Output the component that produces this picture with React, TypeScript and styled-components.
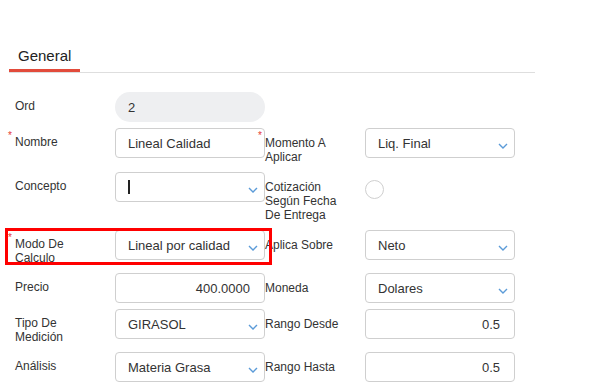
import styled, { createGlobalStyle } from 'styled-components';

const GlobalStyle = createGlobalStyle`
  body {
    margin: 0;
    background: #fff;
    font-family: "Liberation Sans", Arial, sans-serif;
    color: #333;
  }
`;

const Page = styled.div`
  width: 591px;
  height: 391px;
  overflow: hidden;
`;
const TabBar = styled.div`
  margin: 47px 0 0 9px;
  width: 526px;
  border-bottom: 1px solid #dedede;
  display: flex;
`;
const Tab = styled.div`
  padding: 0 9px 4px;
  font-size: 15px;
  line-height: 18px;
  color: #222;
  border-bottom: 3px solid #e24b3b;
`;
const Form = styled.div`
  margin-top: 19px;
  display: flex;
  flex-direction: column;
  gap: 6px;
`;
const Row = styled.div`
  position: relative;
  display: flex;
  align-items: flex-start;
  padding-left: 15px;
`;
const Label = styled.div<{ $side?: 'right' }>`
  position: relative;
  box-sizing: border-box;
  width: 100px;
  flex-shrink: 0;
  padding: ${(p) => (p.$side === 'right' ? '8px' : '7px')} 20px 2px 0;
  font-size: 12px;
  line-height: 14px;
  color: #333;
`;
const Required = styled.span`
  position: absolute;
  left: -7px;
  top: 3px;
  font-size: 10px;
  line-height: 10px;
  color: #e53935;
`;
const Box = styled.div<{ $align?: 'right' }>`
  position: relative;
  box-sizing: border-box;
  width: 150px;
  height: 30px;
  flex-shrink: 0;
  border: 1px solid #cfcfcf;
  border-radius: 4px;
  background: #fff;
  display: flex;
  align-items: center;
  justify-content: ${(p) => (p.$align === 'right' ? 'flex-end' : 'flex-start')};
  padding: 0 14px 0 12px;
  font-size: 13px;
  color: #333;
`;
const Pill = styled(Box)`
  border: none;
  border-radius: 15px;
  background: #eeeff1;
  padding-left: 13px;
`;
const Caret = styled.span`
  width: 1.5px;
  height: 14px;
  background: #222;
`;
const Chevron = styled.svg`
  position: absolute;
  right: 6px;
  top: 14px;
`;
const Radio = styled.div`
  margin-top: 8px;
  width: 19px;
  height: 19px;
  box-sizing: border-box;
  border: 1px solid #cfcfcf;
  border-radius: 50%;
`;
const Highlight = styled.div`
  position: absolute;
  left: 5px;
  top: -2px;
  width: 267px;
  height: 37px;
  box-sizing: border-box;
  border: 3px solid #ff0000;
  pointer-events: none;
`;

function Down() {
  return (
    <Chevron width="10" height="6" viewBox="0 0 10 6">
      <polyline points="1,1 5,5 9,1" fill="none" stroke="#5b9bd8" strokeWidth="1.4" />
    </Chevron>
  );
}

function Select({ value, caret }: { value?: string; caret?: boolean }) {
  return (
    <Box>
      {caret ? <Caret /> : value}
      <Down />
    </Box>
  );
}

function FieldLabel({ text, required, side }: { text: string; required?: boolean; side?: 'right' }) {
  return (
    <Label $side={side}>
      {required && <Required>*</Required>}
      {text}
    </Label>
  );
}

export default function App() {
  return (
    <Page>
      <GlobalStyle />
      <TabBar>
        <Tab>General</Tab>
      </TabBar>
      <Form>
        <Row>
          <FieldLabel text="Ord" />
          <Pill>2</Pill>
        </Row>
        <Row>
          <FieldLabel text="Nombre" required />
          <Box>Lineal Calidad</Box>
          <FieldLabel text="Momento A Aplicar" required side="right" />
          <Select value="Liq. Final" />
        </Row>
        <Row>
          <FieldLabel text="Concepto" />
          <Select caret />
          <FieldLabel text="Cotización Según Fecha De Entrega" side="right" />
          <Radio />
        </Row>
        <Row>
          <FieldLabel text="Modo De Calculo" required />
          <Select value="Lineal por calidad" />
          <FieldLabel text="Aplica Sobre" side="right" />
          <Select value="Neto" />
          <Highlight />
        </Row>
        <Row>
          <FieldLabel text="Precio" />
          <Box $align="right">400.0000</Box>
          <FieldLabel text="Moneda" side="right" />
          <Select value="Dolares" />
        </Row>
        <Row>
          <FieldLabel text="Tipo De Medición" />
          <Select value="GIRASOL" />
          <FieldLabel text="Rango Desde" side="right" />
          <Box $align="right">0.5</Box>
        </Row>
        <Row>
          <FieldLabel text="Análisis" />
          <Select value="Materia Grasa" />
          <FieldLabel text="Rango Hasta" side="right" />
          <Box $align="right">0.5</Box>
        </Row>
      </Form>
    </Page>
  );
}
